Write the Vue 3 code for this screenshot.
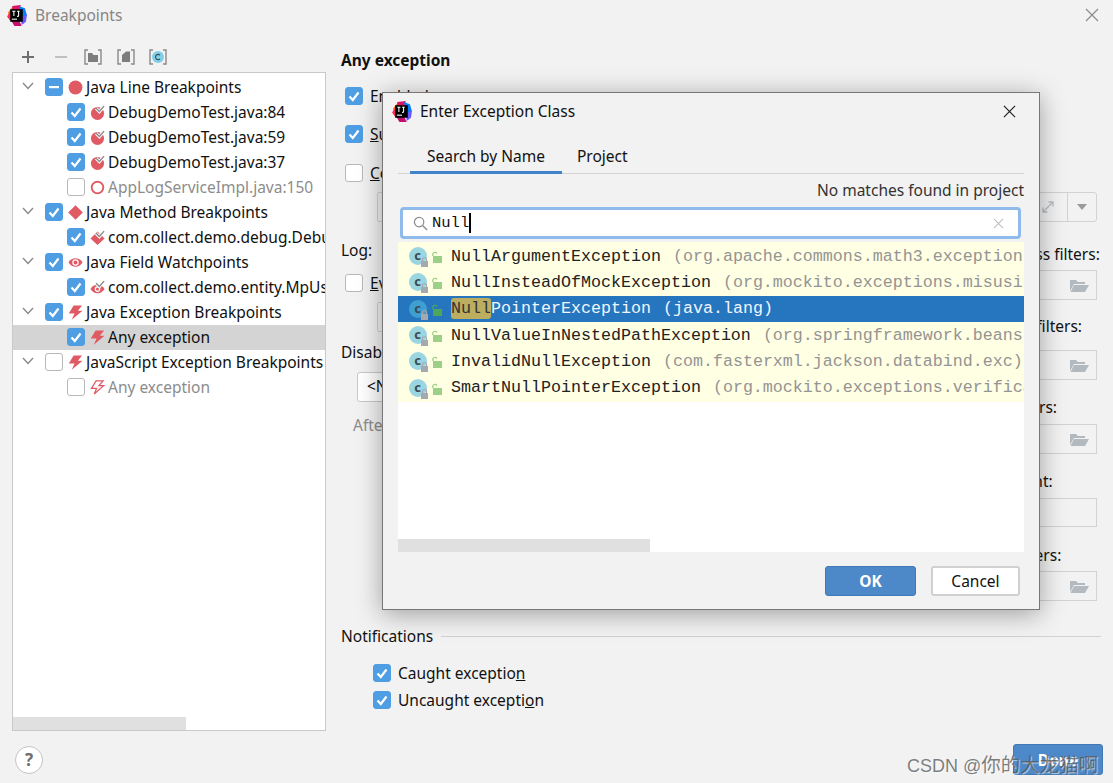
<template>
  <div class="screen">
    <svg class="defs" width="0" height="0">
      <defs>
        <symbol id="logo" viewBox="0 0 20 20">
          <path d="M2 7 L7 1 L11 3 L6 12 L3 14 Z" fill="#f97a12" />
          <path d="M1 11 L5 5 L8 14 L4 15 Z" fill="#fe2857" />
          <path d="M6 1 L14 0 L13 8 L6 8 Z" fill="#dd1265" />
          <path d="M12 1 L18 3 L20 10 L16 12 Z" fill="#087cfa" />
          <path d="M5 15 L12 14 L15 20 L8 20 Z" fill="#c40f6e" />
          <path d="M14 12 L20 9 L19 16 L15 19 Z" fill="#6b57ff" />
          <rect x="4" y="4" width="12" height="12" fill="#000" />
          <rect x="5.5" y="13" width="5" height="1" fill="#fff" />
          <path d="M6 6 H9 M7.5 6 V10.5 M10.5 6 H13 M12 6 V10 Q12 11 10.5 10.8" stroke="#fff" stroke-width="1" fill="none" />
        </symbol>
        <symbol id="dot" viewBox="0 0 16 16"><circle cx="8" cy="8" r="7.4" fill="#e05a64" /></symbol>
        <symbol id="ring" viewBox="0 0 16 16"><circle cx="8" cy="8" r="6.2" fill="none" stroke="#e05a64" stroke-width="2" /></symbol>
        <symbol id="dot-check" viewBox="0 0 16 16">
          <circle cx="8" cy="9" r="7" fill="#e05a64" />
          <path d="M6.5 3.5 L10 7 L15 1.2" fill="none" stroke="#fff" stroke-width="3.4" />
          <path d="M6.5 3.5 L10 7 L15 1.2" fill="none" stroke="#8a8a8a" stroke-width="1.5" />
        </symbol>
        <symbol id="diamond" viewBox="0 0 16 16"><path d="M8 .2 L15.8 8 L8 15.8 L.2 8 Z" fill="#e05a64" /></symbol>
        <symbol id="diamond-check" viewBox="0 0 16 16">
          <path d="M8 1.5 L15.5 9 L8 16 L.5 9 Z" fill="#e05a64" />
          <path d="M6.5 3.5 L10 7 L15 1.2" fill="none" stroke="#fff" stroke-width="3.4" />
          <path d="M6.5 3.5 L10 7 L15 1.2" fill="none" stroke="#8a8a8a" stroke-width="1.5" />
        </symbol>
        <symbol id="eye" viewBox="0 0 16 16">
          <path d="M.5 8 C4 2, 12 2, 15.5 8 C12 14, 4 14, .5 8 Z" fill="#e05a64" />
          <circle cx="8" cy="8" r="3.4" fill="#fff" />
          <circle cx="8" cy="8" r="2.1" fill="#e05a64" />
        </symbol>
        <symbol id="eye-check" viewBox="0 0 16 16">
          <path d="M.5 9.5 C4 3.5, 12 3.5, 15.5 9.5 C12 15.5, 4 15.5, .5 9.5 Z" fill="#e05a64" />
          <circle cx="8" cy="9.7" r="3" fill="#fff" />
          <circle cx="8" cy="9.7" r="1.7" fill="#e05a64" />
          <path d="M6.5 3.5 L10 7 L15 1.2" fill="none" stroke="#fff" stroke-width="3.4" />
          <path d="M6.5 3.5 L10 7 L15 1.2" fill="none" stroke="#8a8a8a" stroke-width="1.5" />
        </symbol>
        <symbol id="bolt" viewBox="0 0 16 16"><path d="M6 .5 H15 L10.5 6 H15.5 L4 15.8 L7 9 H.8 Z" fill="#e05a64" /></symbol>
        <symbol id="bolt-off" viewBox="0 0 16 16"><path d="M6.5 1 H14 L9.5 6 H14.5 L4.5 15 L7 9 H1.5 Z" fill="none" stroke="#e05a64" stroke-width="1.3" /></symbol>
        <symbol id="check" viewBox="0 0 18 18"><path d="M4.5 9.5 L7.8 13 L13.5 5.5" fill="none" stroke="#fff" stroke-width="2.2" /></symbol>
        <symbol id="dash" viewBox="0 0 18 18"><rect x="4" y="8" width="10" height="2.2" fill="#fff" /></symbol>
        <symbol id="folder" viewBox="0 0 20 16">
          <path d="M1 3 H7 L9 5 H16 V7 H5 L1 14 Z" fill="#b2b9bf" />
          <path d="M5 8 H20 L16 15 H1.5 Z" fill="#b2b9bf" />
        </symbol>
      </defs>
    </svg>

    <div class="titlebar">
      <svg class="logo"><use href="#logo" /></svg>
      <span class="title">Breakpoints</span>
      <span class="spacer"></span>
      <svg class="win-close" viewBox="0 0 14 14"><path d="M1 1 L13 13 M13 1 L1 13" stroke="#8c8c8c" stroke-width="1.2" /></svg>
    </div>

    <div class="content">
      <div class="left">
        <div class="toolbar">
          <svg viewBox="0 0 16 16"><path d="M8 2 V14 M2 8 H14" stroke="#6e6e6e" stroke-width="2" /></svg>
          <svg viewBox="0 0 16 16"><path d="M2 8 H14" stroke="#c0c0c0" stroke-width="2" /></svg>
          <svg viewBox="0 0 18 16">
            <path d="M4 1 H1 V15 H4 M14 1 H17 V15 H14" fill="none" stroke="#8a8a8a" stroke-width="1.4" />
            <path d="M4 4 H8 L9.5 6 H14 V13 H4 Z" fill="#7d7d7d" />
          </svg>
          <svg viewBox="0 0 18 16">
            <path d="M4 1 H1 V15 H4 M14 1 H17 V15 H14" fill="none" stroke="#8a8a8a" stroke-width="1.4" />
            <path d="M5 13 V6 L9 2.5 H13 V13 Z" fill="#7d7d7d" />
          </svg>
          <svg viewBox="0 0 18 16">
            <path d="M4 1 H1 V15 H4 M14 1 H17 V15 H14" fill="none" stroke="#8a8a8a" stroke-width="1.4" />
            <circle cx="9" cy="8" r="6" fill="#7fd0e8" />
            <path d="M11 6.2 A2.6 2.6 0 1 0 11 9.8" fill="none" stroke="#3b4a52" stroke-width="1.1" />
          </svg>
        </div>
        <div class="tree">
          <div
            v-for="row in treeRows"
            :key="row.label"
            class="tree-row"
            :class="{ selected: row.selected, child: row.child, muted: !row.on && row.child }"
          >
            <svg v-if="!row.child" class="chevron" viewBox="0 0 12 8"><path d="M1 1 L6 6.5 L11 1" fill="none" stroke="#8a8a8a" stroke-width="1.4" /></svg>
            <span class="box" :class="{ on: row.on }">
              <svg v-if="row.on"><use :href="row.dash ? '#dash' : '#check'" /></svg>
            </span>
            <svg class="bp-icon"><use :href="'#' + row.icon" /></svg>
            <span class="tree-label">{{ row.label }}</span>
          </div>
          <div class="tree-scroll"><div class="tree-thumb"></div></div>
        </div>
        <div class="help">?</div>
      </div>

      <div class="right">
        <div class="details">
          <div class="form">
            <div class="heading">Any exception</div>
            <div class="check-row r-enabled"><span class="box on"><svg><use href="#check" /></svg></span><span class="txt">Enabled</span></div>
            <div class="check-row r-suspend"><span class="box on"><svg><use href="#check" /></svg></span><span class="txt"><u>S</u>uspend:</span></div>
            <div class="check-row r-cond"><span class="box"></span><span class="txt"><u>C</u>ondition:</span></div>
            <div class="field r-field"></div>
            <div class="plain r-log">Log:</div>
            <div class="check-row r-eval"><span class="box"></span><span class="txt"><u>E</u>valuate and log:</span></div>
            <div class="field r-field"></div>
            <div class="plain r-disable">Disable until hitting the following breakpoint:</div>
            <div class="select">&lt;None&gt;</div>
            <div class="plain r-after">After hit:</div>
          </div>
          <div class="filters">
            <div class="expand-field">
              <span class="expand-main">
                <svg viewBox="0 0 16 16"><path d="M3 13 L13 3 M8.5 3 H13 V7.5 M3 8.5 V13 H7.5" fill="none" stroke="#b9bfc4" stroke-width="1.4" /></svg>
              </span>
              <span class="expand-arrow"><i></i></span>
            </div>
            <div v-for="f in filters" :key="f.label" class="filter" :class="f.cls">
              <div class="filter-label">{{ f.label }}</div>
              <div class="filter-input"><svg v-if="f.folder"><use href="#folder" /></svg></div>
            </div>
          </div>
        </div>
        <div class="group-title"><span class="txt">Notifications</span><i></i></div>
        <div class="notify first"><span class="box on"><svg><use href="#check" /></svg></span><span class="txt">Caught exceptio<u>n</u></span></div>
        <div class="notify"><span class="box on"><svg><use href="#check" /></svg></span><span class="txt">Uncaught excepti<u>o</u>n</span></div>
      </div>
    </div>

    <button class="done">Done</button>

    <div class="dialog">
      <div class="dlg-title">
        <svg class="logo"><use href="#logo" /></svg>
        <span>Enter Exception Class</span>
        <span class="spacer"></span>
        <svg class="dlg-close" viewBox="0 0 14 14"><path d="M1 1 L13 13 M13 1 L1 13" stroke="#222" stroke-width="1.3" /></svg>
      </div>
      <div class="tabs">
        <div class="tab active">Search by Name</div>
        <div class="tab">Project</div>
      </div>
      <div class="no-match">No matches found in project</div>
      <div class="search">
        <svg class="glass" viewBox="0 0 16 16"><circle cx="6.5" cy="6.5" r="5" fill="none" stroke="#8d8d8d" stroke-width="1.3" /><path d="M10.2 10.2 L15 15" stroke="#8d8d8d" stroke-width="1.5" /></svg>
        <span class="query">Null</span><span class="caret"></span>
        <span class="spacer"></span>
        <svg class="clear" viewBox="0 0 12 12"><path d="M1 1 L11 11 M11 1 L1 11" stroke="#bdbdbd" stroke-width="1.1" /></svg>
      </div>
      <div class="results">
        <div class="list">
          <div v-for="item in results" :key="item.name" class="result" :class="{ current: item.current }">
            <svg class="class-icon" viewBox="0 0 40 22">
              <circle cx="10" cy="11" r="9" :fill="item.current ? '#3f9fd0' : '#9ad6e2'" />
              <text x="9.5" y="15" text-anchor="middle" class="class-letter">c</text>
              <rect x="13" y="16" width="7" height="6" fill="#a3a9ae" />
              <path d="M14.5 16 V14.5 A2 2 0 0 1 18.5 14.5 V16" fill="none" stroke="#a3a9ae" stroke-width="1.2" />
              <rect x="25" y="11" width="9" height="7" :fill="item.current ? '#4da65a' : '#9dd087'" />
              <path d="M24.8 11 V9 A2.3 2.3 0 0 1 29 8.5" fill="none" :stroke="item.current ? '#4da65a' : '#9dd087'" stroke-width="1.3" />
            </svg>
            <span class="result-name"><span v-if="item.current" class="hit">Null</span>{{ item.current ? item.name.slice(4) : item.name }}</span>
            <span class="result-pkg">{{ item.pkg }}</span>
          </div>
        </div>
        <div class="list-scroll"></div>
      </div>
      <div class="dlg-buttons">
        <button class="ok">OK</button>
        <button class="cancel">Cancel</button>
      </div>
    </div>

    <div class="watermark">CSDN @<span>你的大龙猫啊</span></div>
  </div>
</template>

<script setup>
const treeRows = [
  { label: 'Java Line Breakpoints', on: true, dash: true, icon: 'dot' },
  { label: 'DebugDemoTest.java:84', on: true, child: true, icon: 'dot-check' },
  { label: 'DebugDemoTest.java:59', on: true, child: true, icon: 'dot-check' },
  { label: 'DebugDemoTest.java:37', on: true, child: true, icon: 'dot-check' },
  { label: 'AppLogServiceImpl.java:150', on: false, child: true, icon: 'ring' },
  { label: 'Java Method Breakpoints', on: true, icon: 'diamond' },
  { label: 'com.collect.demo.debug.DebugDemoTest', on: true, child: true, icon: 'diamond-check' },
  { label: 'Java Field Watchpoints', on: true, icon: 'eye' },
  { label: 'com.collect.demo.entity.MpUser', on: true, child: true, icon: 'eye-check' },
  { label: 'Java Exception Breakpoints', on: true, icon: 'bolt' },
  { label: 'Any exception', on: true, child: true, selected: true, icon: 'bolt' },
  { label: 'JavaScript Exception Breakpoints', on: false, icon: 'bolt' },
  { label: 'Any exception ', on: false, child: true, icon: 'bolt-off' }
]

const filters = [
  { label: 'Catch class filters:', cls: 'f1', folder: true },
  { label: 'Instance filters:', cls: 'f2', folder: true },
  { label: 'Class filters:', cls: 'f3', folder: true },
  { label: 'Pass count:', cls: 'f4', folder: false },
  { label: 'Caller filters:', cls: 'f5', folder: true }
]

const results = [
  { name: 'NullArgumentException', pkg: '(org.apache.commons.math3.exception)' },
  { name: 'NullInsteadOfMockException', pkg: '(org.mockito.exceptions.misusing)' },
  { name: 'NullPointerException', pkg: '(java.lang)', current: true },
  { name: 'NullValueInNestedPathException', pkg: '(org.springframework.beans)' },
  { name: 'InvalidNullException', pkg: '(com.fasterxml.jackson.databind.exc)' },
  { name: 'SmartNullPointerException', pkg: '(org.mockito.exceptions.verification)' }
]
</script>

<style>
html, body {
  margin: 0;
  background: #f2f2f2;
}
</style>

<style scoped>
.screen {
  position: relative;
  width: 1113px;
  height: 783px;
  overflow: hidden;
  background: #f2f2f2;
  color: #111;
  font-family: "Noto Sans", sans-serif;
  font-size: 15.5px;
}
.defs { position: absolute; }
.spacer { flex: 1; }
.txt { padding-bottom: 1px; }

.titlebar {
  display: flex;
  align-items: center;
  height: 30px;
  padding: 0 14px 0 6px;
  color: #868686;
}
.logo { width: 21px; height: 21px; margin-right: 8px; flex: none; }
.title { padding-bottom: 1px; }
.win-close { width: 14px; height: 14px; }

.content { display: flex; height: 753px; }

.left {
  width: 314px;
  margin-left: 12px;
  flex: none;
}
.toolbar {
  display: flex;
  align-items: center;
  gap: 14.5px;
  height: 42px;
  padding: 12px 0 0 7px;
  box-sizing: border-box;
}
.toolbar svg { width: 18px; height: 16px; flex: none; }

.tree {
  position: relative;
  height: 659px;
  box-sizing: border-box;
  padding-top: 2px;
  background: #fff;
  border: 1px solid #c9c9c9;
}
.tree-row {
  display: flex;
  align-items: center;
  height: 25px;
  padding-left: 9px;
  white-space: nowrap;
  overflow: hidden;
}
.tree-row.child { padding-left: 54px; }
.tree-row.selected { background: #d4d4d4; }
.tree-row.muted .tree-label { color: #8c8c8c; }
.tree-row .box { margin-bottom: 1px; }
.chevron { width: 12px; height: 8px; margin: 0 11px 3px 0; flex: none; }
.bp-icon { width: 15px; height: 15px; margin: 0 3px 0 5px; flex: none; }
.tree-label { flex: none; padding-bottom: 2px; }
.tree-scroll {
  position: absolute;
  left: 0;
  right: 0;
  bottom: 0;
  height: 13px;
}
.tree-thumb { width: 173px; height: 100%; background: #e0e0e0; }

.box {
  width: 18px;
  height: 18px;
  flex: none;
  box-sizing: border-box;
  background: #fff;
  border: 1px solid #b8b8b8;
  border-radius: 3px;
}
.box.on { background: #4f9ee3; border-color: #4f9ee3; }
.box svg { display: block; width: 18px; height: 18px; margin: -1px; }

.help {
  width: 28px;
  height: 28px;
  margin: 15px 0 0 3px;
  box-sizing: border-box;
  background: #fff;
  border: 1px solid #c4c4c4;
  border-radius: 50%;
  color: #6e6e6e;
  font-weight: 700;
  font-size: 17px;
  line-height: 25px;
  text-align: center;
}

.right {
  flex: 1;
  padding: 18px 12px 0 15px;
}
.details { display: flex; justify-content: space-between; }
.form { width: 600px; }
.heading { height: 24px; line-height: 24px; font-weight: 700; }
.check-row, .notify {
  display: flex;
  align-items: center;
  gap: 7px;
  height: 24px;
  white-space: nowrap;
}
.check-row { margin-left: 4px; }
.plain { height: 24px; line-height: 24px; white-space: nowrap; }
.r-enabled { margin-top: 12px; }
.r-suspend { margin-top: 14px; }
.r-cond { margin-top: 15px; }
.field {
  height: 30px;
  margin: 7px 0 0 36px;
  box-sizing: border-box;
  border: 1px solid #d2d2d2;
  border-radius: 2px;
}
.r-log { margin-top: 16px; }
.r-eval { margin-top: 9px; }
.r-disable { margin-top: 8px; }
.select {
  width: 120px;
  height: 30px;
  margin: 8px 0 0 16px;
  padding-left: 9px;
  box-sizing: border-box;
  line-height: 27px;
  background: #fff;
  border: 1px solid #c9c9c9;
  border-radius: 3px;
}
.r-after { margin: 11px 0 0 12px; color: #8c8c8c; }

.filters { width: 127px; margin-right: 4px; padding-top: 144px; }
.expand-field {
  display: flex;
  height: 30px;
  box-sizing: border-box;
  border: 1px solid #d2d2d2;
  border-radius: 3px;
}
.expand-main {
  flex: 1;
  display: flex;
  align-items: center;
  justify-content: flex-end;
  padding-right: 11px;
  border-right: 1px solid #d2d2d2;
}
.expand-main svg { width: 16px; height: 16px; }
.expand-arrow {
  width: 28px;
  display: flex;
  align-items: center;
  justify-content: center;
}
.expand-arrow i {
  width: 0;
  height: 0;
  border: 5px solid transparent;
  border-top: 6px solid #9a9a9a;
  border-bottom: 0;
}
.filter-label { height: 24px; line-height: 24px; white-space: nowrap; }
.filter-input {
  display: flex;
  align-items: center;
  justify-content: flex-end;
  height: 30px;
  padding-right: 7px;
  box-sizing: border-box;
  border: 1px solid #d2d2d2;
}
.filter-input svg { width: 20px; height: 16px; }
.f1 { margin-top: 20px; }
.f1 .filter-input { margin-top: 4px; }
.f2 { margin-top: 14px; }
.f2 .filter-input { margin-top: 12px; }
.f3 { margin-top: 15px; }
.f3 .filter-input { margin-top: 5px; }
.f4 { margin-top: 15px; }
.f4 .filter-input { margin-top: 5px; height: 29px; }
.f5 { margin-top: 16px; }
.f5 .filter-input { margin-top: 4px; }

.group-title {
  display: flex;
  align-items: center;
  gap: 8px;
  height: 24px;
  margin-top: 23px;
}
.group-title i { flex: 1; height: 1px; background: #d2d2d2; }
.notify { margin-left: 32px; margin-top: 3px; }
.notify.first { margin-top: 13px; }

.done {
  position: absolute;
  left: 1013px;
  top: 744px;
  width: 90px;
  height: 31px;
  background: #4d88c8;
  border: 1px solid #4279b5;
  border-radius: 3px;
  color: #fff;
  font: 700 15.5px "Noto Sans", sans-serif;
}

.dialog {
  position: absolute;
  left: 382px;
  top: 92px;
  width: 658px;
  height: 518px;
  box-sizing: border-box;
  padding: 0 15px;
  background: #f2f2f2;
  border: 1px solid #777;
  box-shadow: 0 4px 24px rgba(0, 0, 0, 0.35);
}
.dlg-title {
  display: flex;
  align-items: center;
  height: 36px;
  margin-left: -7px;
  margin-right: 8px;
}
.dlg-close { width: 13px; height: 13px; }
.tabs {
  display: flex;
  height: 45px;
  box-sizing: border-box;
  border-bottom: 1px solid #d2d2d2;
  padding: 13px 0 0 12px;
}
.tab { padding: 0 17px; height: 32px; line-height: 28px; box-sizing: border-box; white-space: nowrap; }
.tab.active { border-bottom: 3px solid #4083c9; }
.tab + .tab { padding-left: 15px; }
.no-match {
  height: 33px;
  line-height: 33px;
  text-align: right;
  color: #333;
}
.search {
  display: flex;
  align-items: center;
  width: 621px;
  height: 32px;
  margin-left: 2px;
  box-sizing: border-box;
  padding: 0 14px 0 10px;
  background: #fff;
  border: 3px solid #8fbbec;
  border-radius: 4px;
}
.glass { width: 15px; height: 15px; margin-right: 4px; flex: none; }
.query { font: 15.5px "Liberation Mono", monospace; }
.caret { width: 2px; height: 20px; background: #000; }
.clear { width: 11px; height: 11px; }

.results {
  position: relative;
  height: 310px;
  margin-top: 3px;
  background: #fff;
  overflow: hidden;
}
.list { background: #ffffe4; padding: 1px 0; }
.result {
  display: flex;
  align-items: center;
  height: 26.3px;
  padding-left: 10px;
  white-space: nowrap;
  font: 16.67px "Liberation Mono", monospace;
  color: #222;
  overflow: hidden;
}
.result.current { background: #2675bf; color: #f2f6fa; }
.class-icon { width: 40px; height: 22px; margin-right: 3px; flex: none; }
.class-letter { font: 700 13px "Noto Sans", sans-serif; fill: #3b4a52; }
.hit {
  display: inline-block;
  background: #bcae5e;
  color: #333;
  border-radius: 3px;
  line-height: 21px;
}
.result-pkg { margin-left: 12px; color: #949494; }
.result.current .result-pkg { color: #f2f6fa; }
.list-scroll {
  position: absolute;
  left: 0;
  bottom: 0;
  width: 252px;
  height: 13px;
  background: #e0e0e0;
}
.dlg-buttons {
  display: flex;
  justify-content: flex-end;
  gap: 15px;
  margin: 14px 4px 0 0;
}
.dlg-buttons button {
  height: 30px;
  font: 15.5px "Noto Sans", sans-serif;
  border-radius: 3px;
  box-sizing: border-box;
}
.ok {
  width: 91px;
  background: #4d88c8;
  border: 1px solid #4279b5;
  color: #fff;
  font-weight: 700 !important;
}
.cancel {
  width: 89px;
  background: #fff;
  border: 2px solid #d0d0d0;
  color: #111;
}

.watermark {
  position: absolute;
  left: 907px;
  top: 749px;
  font: 18px "Liberation Sans", "Noto Sans CJK SC", sans-serif;
  color: rgba(85, 85, 85, 0.75);
  text-shadow: 1px 1px 1px rgba(255, 255, 255, 0.6);
  white-space: nowrap;
}
.watermark span { font-size: 19.5px; }
</style>
